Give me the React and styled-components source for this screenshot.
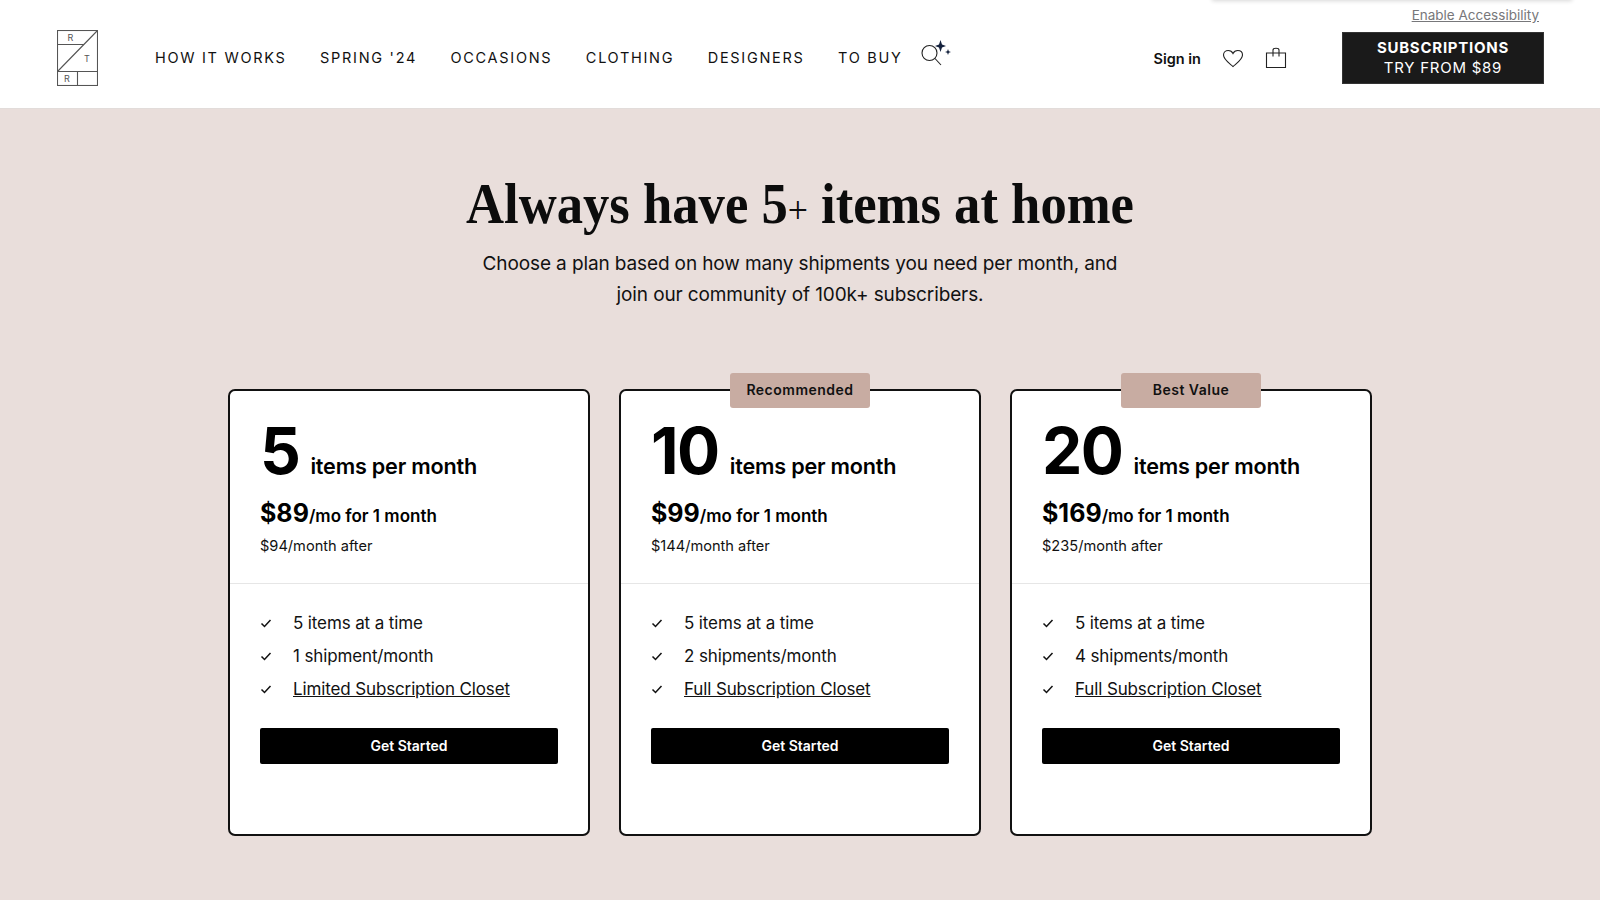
import React from "react";
import styled, { createGlobalStyle } from "styled-components";

const SANS = `Inter, "Liberation Sans", sans-serif`;
const SERIF = `"Liberation Serif", "DejaVu Serif", serif`;

const GlobalStyle = createGlobalStyle`
  html, body {
    margin: 0;
    padding: 0;
    background: #e9dedb;
    font-family: ${SANS};
    color: #000;
  }
  * { box-sizing: border-box; }
`;

const Page = styled.div`
  width: 1600px;
  height: 900px;
  overflow: hidden;
  background: #e9dedb;
`;

const Header = styled.header`
  position: relative;
  height: 109px;
  background: #fff;
  border-bottom: 1px solid #e2dcda;
  display: flex;
  align-items: center;
  padding: 8px 56px 0 57px;
`;

const TopShadow = styled.div`
  position: absolute;
  top: -6px;
  left: 1212px;
  width: 360px;
  height: 6px;
  box-shadow: 0 1px 4px rgba(0, 0, 0, 0.16);
`;

const Accessibility = styled.a`
  position: absolute;
  top: 7px;
  right: 61px;
  font-size: 13.5px;
  line-height: 17px;
  color: #77777a;
  text-decoration: underline;
`;

const Logo = styled.svg`
  width: 41px;
  height: 56px;
  flex: none;
  margin-top: -1px;
`;

const Nav = styled.nav`
  display: flex;
  align-items: center;
  gap: 33.5px;
  margin-left: 57px;
`;

const NavLink = styled.a`
  font-size: 14.5px;
  line-height: 20px;
  letter-spacing: 1.7px;
  color: #111;
  white-space: nowrap;
`;

const SearchIcon = styled.svg`
  width: 32px;
  height: 32px;
  margin: -8px 0 0 -15px;
`;

const Actions = styled.div`
  margin-left: auto;
  display: flex;
  align-items: center;
`;

const SignIn = styled.a`
  font-size: 14.5px;
  font-weight: 600;
  color: #111;
  margin-right: 21px;
`;

const IconSlot = styled.svg`
  width: 22px;
  height: 22px;
  margin-right: ${(props) => props.$gap || 0}px;
`;

const TrialButton = styled.a`
  width: 202px;
  height: 52px;
  background: #1a1a1a;
  border: 1px solid #333;
  color: #fff;
  font-size: 15px;
  line-height: 20px;
  letter-spacing: 0.75px;
  display: flex;
  flex-direction: column;
  align-items: center;
  justify-content: center;
  margin-left: 55px;
`;

const TrialTitle = styled.span`
  font-weight: 700;
`;

const Hero = styled.section`
  text-align: center;
  padding-top: 64px;
`;

const Title = styled.h1`
  margin: 0;
  font-family: ${SERIF};
  font-weight: 700;
  font-size: 56px;
  line-height: 62px;
  color: #0c0c0c;
  transform: scaleX(0.94);
`;

const PlusSign = styled.span`
  font-weight: 400;
  font-size: 38px;
`;

const Subtitle = styled.p`
  margin: 7px 0 0;
  font-size: 19px;
  line-height: 31px;
  letter-spacing: -0.12px;
  color: #111;
`;

const Plans = styled.div`
  display: flex;
  justify-content: center;
  gap: 29px;
  margin-top: 79px;
`;

const Card = styled.article`
  position: relative;
  width: 362px;
  height: 447px;
  background: #fff;
  border: 2px solid #111;
  border-radius: 7px;
`;

const Badge = styled.div`
  position: absolute;
  top: -18px;
  left: 50%;
  transform: translateX(-50%);
  width: 140px;
  height: 35px;
  padding-bottom: 2px;
  background: #c8aca2;
  border-radius: 3px;
  font-size: 14px;
  font-weight: 600;
  letter-spacing: 0.5px;
  display: flex;
  align-items: center;
  justify-content: center;
  color: #111;
`;

const CardTop = styled.div`
  height: 193px;
  padding: 26px 30px 0;
  border-bottom: 1px solid #e6e6e6;
`;

const Amount = styled.div`
  display: flex;
  align-items: baseline;
  gap: 11px;
  height: 68px;
`;

const Count = styled.span`
  font-size: 64px;
  line-height: 68px;
  font-weight: 700;
  letter-spacing: -1.5px;
`;

const Unit = styled.span`
  font-size: 21.6px;
  font-weight: 600;
  letter-spacing: -0.2px;
`;

const PriceRow = styled.div`
  margin-top: 12px;
  font-size: 17px;
  line-height: 32px;
  font-weight: 600;
`;

const Price = styled.span`
  font-size: 25px;
  font-weight: 700;
`;

const After = styled.div`
  margin-top: 3px;
  font-size: 14.6px;
  line-height: 22px;
  color: #111;
`;

const CardBottom = styled.div`
  padding: 22px 30px 0;
`;

const Features = styled.ul`
  list-style: none;
  margin: 0;
  padding: 0;
  display: flex;
  flex-direction: column;
`;

const Feature = styled.li`
  display: flex;
  align-items: center;
  height: 33.4px;
  font-size: 17px;
  letter-spacing: -0.13px;
  color: #111;
`;

const Check = styled.svg`
  width: 12px;
  height: 12px;
  flex: none;
  margin-right: 21px;
`;

const FeatureLink = styled.a`
  text-decoration: underline;
`;

const CtaButton = styled.a`
  margin-top: 22px;
  height: 36px;
  padding-bottom: 1px;
  background: #000;
  border-radius: 2px;
  color: #fff;
  font-size: 14px;
  font-weight: 600;
  display: flex;
  align-items: center;
  justify-content: center;
`;

const NAV_ITEMS = ["HOW IT WORKS", "SPRING '24", "OCCASIONS", "CLOTHING", "DESIGNERS", "TO BUY"];

const PLANS = [
  { count: 5, price: "$89", after: "$94/month after", shipments: "1 shipment/month", closet: "Limited Subscription Closet" },
  { count: 10, price: "$99", after: "$144/month after", shipments: "2 shipments/month", closet: "Full Subscription Closet", badge: "Recommended" },
  { count: 20, price: "$169", after: "$235/month after", shipments: "4 shipments/month", closet: "Full Subscription Closet", badge: "Best Value" },
];

const CheckMark = () => (
  <Check viewBox="0 0 12 12" fill="none" stroke="#111" strokeWidth="1.5">
    <path d="M1.5 6.5 L4.5 9.5 L10.5 3" />
  </Check>
);

function Plan({ plan }) {
  return (
    <Card>
      {plan.badge && <Badge>{plan.badge}</Badge>}
      <CardTop>
        <Amount>
          <Count>{plan.count}</Count>
          <Unit>items per month</Unit>
        </Amount>
        <PriceRow>
          <Price>{plan.price}</Price>/mo for 1 month
        </PriceRow>
        <After>{plan.after}</After>
      </CardTop>
      <CardBottom>
        <Features>
          <Feature><CheckMark />5 items at a time</Feature>
          <Feature><CheckMark />{plan.shipments}</Feature>
          <Feature><CheckMark /><FeatureLink>{plan.closet}</FeatureLink></Feature>
        </Features>
        <CtaButton>Get Started</CtaButton>
      </CardBottom>
    </Card>
  );
}

export default function App() {
  return (
    <Page>
      <GlobalStyle />
      <Header>
        <TopShadow />
        <Accessibility>Enable Accessibility</Accessibility>
        <Logo viewBox="0 0 41 56" fill="none" stroke="#555" strokeWidth="1.1">
          <rect x="0.5" y="0.5" width="40" height="55" />
          <path d="M0.5 14.5 H27 M0.5 41.5 H40.5 M20.5 41.5 V55.5 M0.5 41.5 L40.5 0.5" />
          <text x="13.5" y="11" fontSize="9" fontFamily="Inter" fill="#555" stroke="none" textAnchor="middle">R</text>
          <text x="30" y="32" fontSize="9" fontFamily="Inter" fill="#555" stroke="none" textAnchor="middle">T</text>
          <text x="10" y="52" fontSize="9" fontFamily="Inter" fill="#555" stroke="none" textAnchor="middle">R</text>
        </Logo>
        <Nav>
          {NAV_ITEMS.map((item) => (
            <NavLink key={item}>{item}</NavLink>
          ))}
          <SearchIcon viewBox="0 0 32 32" fill="none">
            <circle cx="8.5" cy="15" r="7.5" stroke="#222" strokeWidth="1.1" />
            <path d="M14 20.5 L20 27" stroke="#222" strokeWidth="1.1" />
            <path d="M19.5 2 L21 6.5 L25 8 L21 9.5 L19.5 14 L18 9.5 L14 8 L18 6.5 Z" fill="#14213d" />
            <path d="M27 11 L27.8 13.2 L30 14 L27.8 14.8 L27 17 L26.2 14.8 L24 14 L26.2 13.2 Z" fill="#14213d" />
          </SearchIcon>
        </Nav>
        <Actions>
          <SignIn>Sign in</SignIn>
          <IconSlot viewBox="0 0 22 22" fill="none" stroke="#222" strokeWidth="1.1" $gap={21}>
            <path d="M11 19.5 C7 16 1.5 12.5 1.5 8 C1.5 5 3.8 3.5 6.3 3.5 C8.4 3.5 10 4.5 11 6.5 C12 4.5 13.6 3.5 15.7 3.5 C18.2 3.5 20.5 5 20.5 8 C20.5 12.5 15 16 11 19.5 Z" />
          </IconSlot>
          <IconSlot viewBox="0 0 22 22" fill="none" stroke="#222" strokeWidth="1.1">
            <path d="M1.5 6 H20.5 V20.5 H1.5 Z M8 9.5 V3 C8 1.8 9 1.2 11 1.2 C13 1.2 14 1.8 14 3 V9.5" />
          </IconSlot>
          <TrialButton>
            <TrialTitle>SUBSCRIPTIONS</TrialTitle>
            <span>TRY FROM $89</span>
          </TrialButton>
        </Actions>
      </Header>
      <Hero>
        <Title>
          Always have 5<PlusSign>+</PlusSign> items at home
        </Title>
        <Subtitle>
          Choose a plan based on how many shipments you need per month, and
          <br />
          join our community of 100k+ subscribers.
        </Subtitle>
      </Hero>
      <Plans>
        {PLANS.map((plan) => (
          <Plan key={plan.count} plan={plan} />
        ))}
      </Plans>
    </Page>
  );
}
